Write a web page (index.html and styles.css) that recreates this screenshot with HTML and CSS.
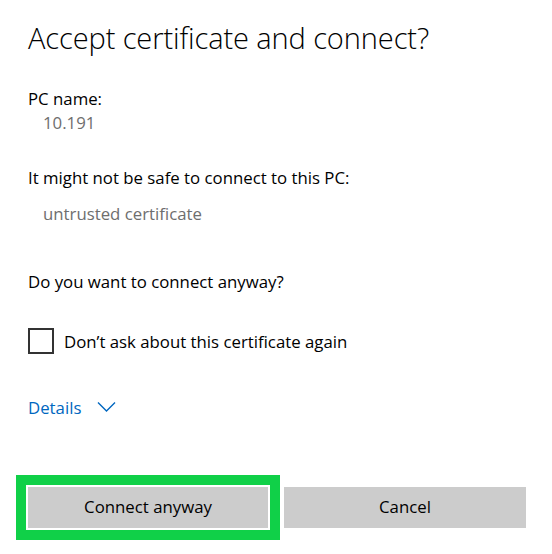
FILE: index.html
```html
<!DOCTYPE html>
<html>
<head>
<meta charset="utf-8">
<link rel="stylesheet" href="styles.css">
</head>
<body>
<div class="dialog">
  <h1 class="title">Accept certificate and connect?</h1>
  <div class="label first">PC name:</div>
  <div class="value">10.191</div>
  <div class="label warn">It might not be safe to connect to this PC:</div>
  <div class="value reason">untrusted certificate</div>
  <div class="label question">Do you want to connect anyway?</div>
  <label class="check">
    <span class="box"></span>
    <span class="check-text">Don’t ask about this certificate again</span>
  </label>
  <div class="details">
    <span>Details</span>
    <svg class="chev" width="19" height="12" viewBox="0 0 19 12"><path d="M1 1.5 L9.5 10 L18 1.5" fill="none" stroke="#0067c0" stroke-width="1.4"/></svg>
  </div>
  <div class="buttons">
    <button class="btn primary">Connect anyway</button>
    <button class="btn">Cancel</button>
  </div>
</div>
</body>
</html>
```
FILE: styles.css
```css
html, body {
  margin: 0;
  padding: 0;
  background: #ffffff;
}
body {
  font-family: "Open Sans", "Noto Sans", sans-serif;
  color: #000000;
}
.dialog {
  width: 552px;
  height: 554px;
  box-sizing: border-box;
  padding: 0 26px 0 28px;
  display: flex;
  flex-direction: column;
}
.title {
  margin: 19px 0 0 0;
  font-weight: 300;
  font-size: 29px;
  line-height: 38px;
  letter-spacing: -0.1px;
}
.label {
  font-size: 16.8px;
  line-height: 22px;
}
.first { margin-top: 31px; }
.value {
  font-size: 16.8px;
  line-height: 22px;
  color: #6e6e6e;
  padding-left: 15px;
  margin-top: 2px;
}
.warn { margin-top: 33px; }
.reason { margin-top: 14px; }
.question { margin-top: 46px; }
.check {
  margin-top: 35px;
  display: flex;
  align-items: center;
  gap: 10px;
  font-size: 16.8px;
}
.box {
  width: 22px;
  height: 22px;
  border: 2px solid #333333;
  box-sizing: content-box;
  flex: none;
}
.details {
  margin-top: 43px;
  display: flex;
  align-items: center;
  gap: 16px;
  color: #0067c0;
  font-size: 16.8px;
  line-height: 22px;
}
.chev { margin-top: -3px; }
.buttons {
  margin-top: 68px;
  display: flex;
  gap: 16px;
}
.btn {
  height: 41px;
  border: none;
  background: #cccccc;
  font-family: inherit;
  font-size: 16.8px;
  color: #000000;
  padding: 0 0 2px 0;
  width: 242px;
}
.btn.primary {
  width: 240px;
  box-shadow: 0 0 0 2px #ffffff, 0 0 0 12px #10d048;
}
```
